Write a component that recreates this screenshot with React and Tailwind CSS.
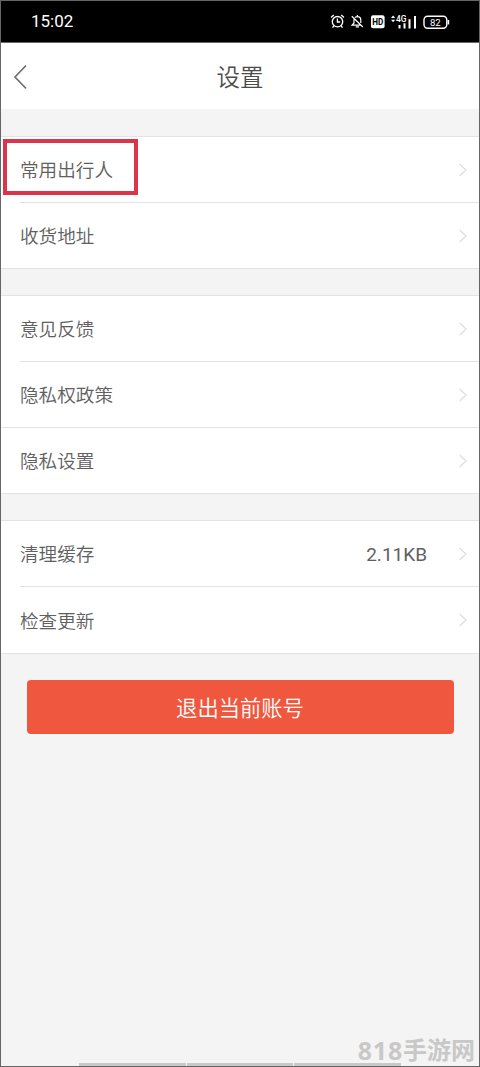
import clsx from 'clsx';

const groups = [
  [{ label: '常用出行人', marked: true }, { label: '收货地址' }],
  [{ label: '意见反馈' }, { label: '隐私权政策', fullLine: true }, { label: '隐私设置' }],
  [{ label: '清理缓存', value: '2.11KB' }, { label: '检查更新', tall: true }],
];

function StatusIcons() {
  return (
    <svg className="mb-[1px]" width="122" height="20" viewBox="0 0 122 20" fill="none" stroke="#fff" aria-hidden="true">
      {/* alarm clock */}
      <circle cx="8.5" cy="10.7" r="5.2" strokeWidth="1.4" />
      <path d="M8.4 7.6v3.4h2.8M2 6.5L4.8 4M15 6.500L12.200 4M4.800 15l-1.300 1.600M12.200 15l1.300 1.600" strokeWidth="1.3" />
      {/* muted bell */}
      <path d="M26 6.6c.6-.6 1.400-.9 2.400-.9 2.200 0 3.400 1.600 3.400 3.600v2.800M25 8.200V12l-1.900 2.100h8.400M26.800 15.900H30M28.400 4v1.400M22.800 5.200l11 10.800" strokeWidth="1.2" />
      {/* HD badge */}
      <rect x="42" y="4.2" width="13.6" height="13" rx="2" fill="#fff" stroke="none" />
      <text x="48.8" y="14.2" textAnchor="middle" fontSize="9.6" fontWeight="700" textLength="11" lengthAdjust="spacingAndGlyphs" fill="#000" stroke="none">HD</text>
      {/* mobile signal */}
      <path d="M62 7l2.1-2.500L66.200 7zM62 8.800l2.100 2.500 2.100-2.500z" fill="#fff" stroke="none" />
      <text x="67" y="11" fontSize="9.4" fontWeight="500" textLength="10.5" lengthAdjust="spacingAndGlyphs" fill="#fff" stroke="none">4G</text>
      <path d="M70.500 14v3.500M75.500 12.200v5.300M80.500 8.200v9.300M86 5v12.500" strokeWidth="2" />
      {/* battery */}
      <rect x="95" y="5.2" width="22.8" height="12" rx="3.6" strokeWidth="1.4" />
      <path d="M119.400 9v4.400" strokeWidth="1.6" />
      <text x="106.300" y="14.6" textAnchor="middle" fontSize="9.6" fill="#fff" stroke="none">82</text>
    </svg>
  );
}

function Chevron() {
  return (
    <svg className="ml-[32px] shrink-0" width="8" height="14" viewBox="0 0 8 14" fill="none" stroke="#dcdcdc" strokeWidth="1.1">
      <path d="M.7 1l6.3 6-6.3 6" />
    </svg>
  );
}

function Row({ item, last }) {
  return (
    <li
      className={clsx(
        'relative flex items-center pr-[12px]',
        last && !item.tall ? 'h-[65px]' : 'h-[66px]',
        item.fullLine ? 'pl-[19px]' : 'ml-[19px]',
        !last && 'border-b border-[#e3e3e3]'
      )}
    >
      <span className="pt-[5px] text-[18.6px] font-[350]">{item.label}</span>
      {item.value && <span className="ml-auto pt-[4px] font-['Roboto'] text-[19px]">{item.value}</span>}
      <span className={clsx(!item.value && 'ml-auto')}>
        <Chevron />
      </span>
      {item.marked && <span className="absolute -left-[17px] top-[2px] h-[56px] w-[135px] border-4 border-[#dc3549]" />}
    </li>
  );
}

export default function App() {
  return (
    <div className="relative flex h-[1067px] w-[480px] flex-col overflow-hidden border border-[#666] bg-[#f4f4f4] font-['Roboto','Noto_Sans_CJK_SC',sans-serif] text-[#606060]">
      <div className="flex h-[42px] shrink-0 items-center justify-between border-b border-[#666] bg-black pl-[30px] pr-[28px] text-white">
        <span className="text-[17px]">15:02</span>
        <StatusIcons />
      </div>

      <header className="grid h-[66px] shrink-0 grid-cols-[60px_1fr_60px] items-center bg-white">
        <button className="pl-[12px] pt-[2px]" aria-label="返回">
          <svg width="14" height="26" viewBox="0 0 14 26" fill="none" stroke="#6a6a6a" strokeWidth="1.6">
            <path d="M13 1.5L2 13l11 11.5" />
          </svg>
        </button>
        <h1 className="pt-[6px] text-center text-[23.5px] font-[350] text-[#4c4c4c]">设置</h1>
      </header>

      <main>
        {groups.map((items, i) => (
          <ul key={i} className="mt-[26px] border-y border-[#e3e3e3] bg-white first:mt-[27px]">
            {items.map((item, j) => (
              <Row key={item.label} item={item} last={j === items.length - 1} />
            ))}
          </ul>
        ))}
        <button className="mx-[25.5px] mt-[26px] flex h-[54px] w-[427px] items-center justify-center rounded-[4px] bg-[#ef583f] pt-[3px] text-[21.3px] font-[350] text-white">
          退出当前账号
        </button>
      </main>

      {/* site watermark */}
      <div className="absolute bottom-0 right-[4px] flex items-center font-['Open_Sans','Noto_Sans_CJK_SC',sans-serif] text-[24px] font-bold leading-[32px] text-[#c8c8c8]">
        <span className="text-[25px] tracking-[0.8px]">818</span>
        <span>手游网</span>
      </div>
      {/* system navigation hint */}
      <div className="absolute bottom-0 left-[78px] flex h-[3px] w-[322px] gap-px">
        <span className="flex-1 bg-[#c9c9c9]" />
        <span className="flex-1 bg-[#c9c9c9]" />
        <span className="flex-1 bg-[#c9c9c9]" />
      </div>
    </div>
  );
}
